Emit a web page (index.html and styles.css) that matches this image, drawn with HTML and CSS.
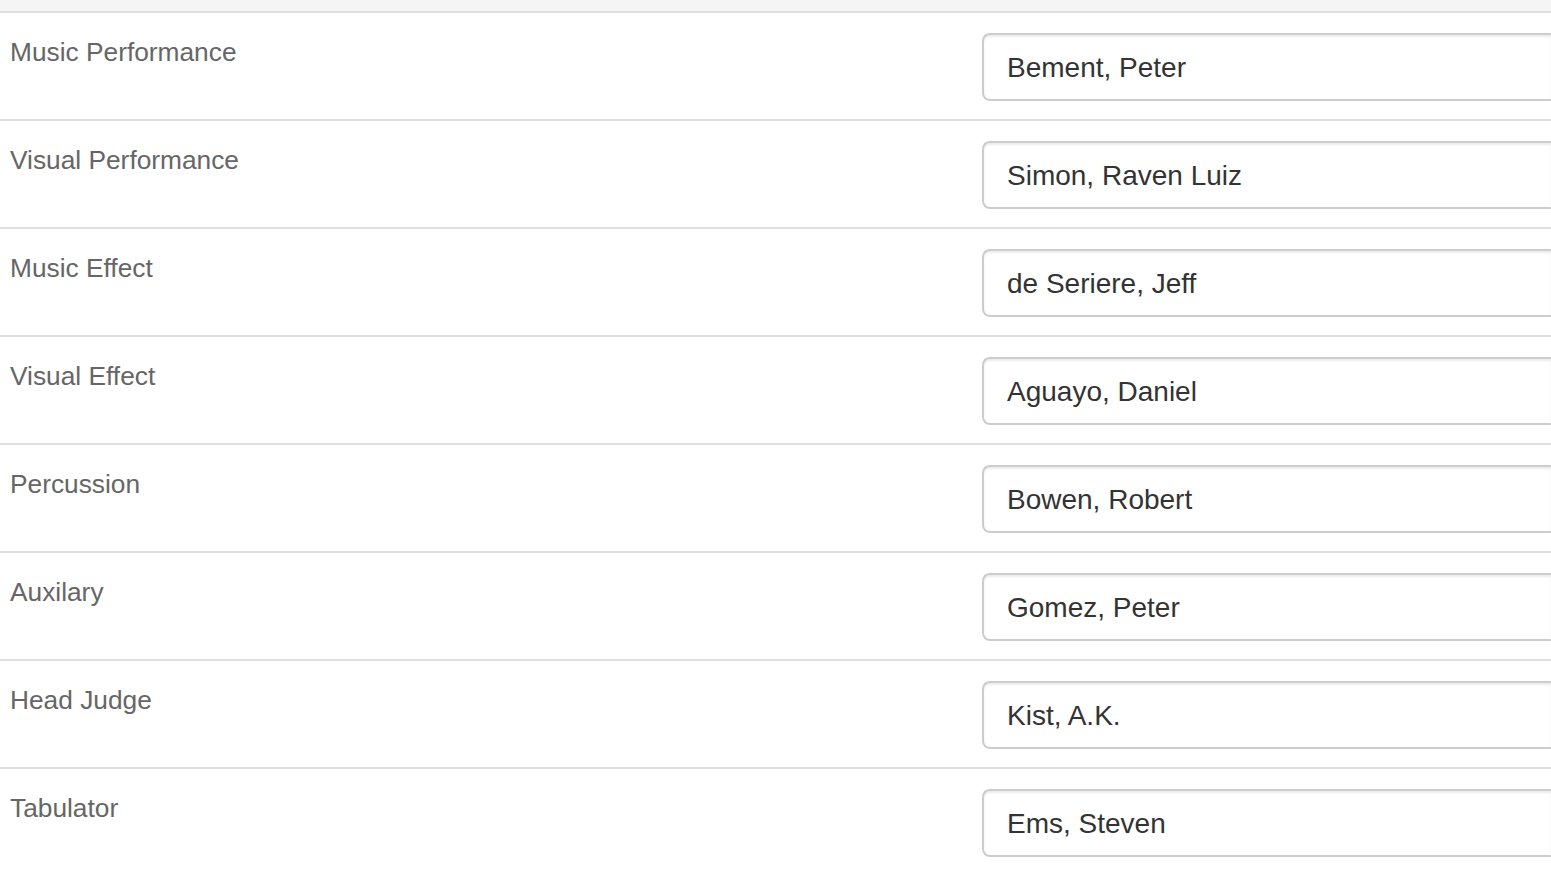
FILE: index.html
```html
<!DOCTYPE html>
<html>
<head>
<meta charset="utf-8">
<link rel="stylesheet" href="styles.css">
</head>
<body>
<div class="topbar"></div>
<div class="judges">
  <div class="row"><div class="label">Music Performance</div><div class="field"><input class="control" type="text" value="Bement, Peter"></div></div>
  <div class="row"><div class="label">Visual Performance</div><div class="field"><input class="control" type="text" value="Simon, Raven Luiz"></div></div>
  <div class="row"><div class="label">Music Effect</div><div class="field"><input class="control" type="text" value="de Seriere, Jeff"></div></div>
  <div class="row"><div class="label">Visual Effect</div><div class="field"><input class="control" type="text" value="Aguayo, Daniel"></div></div>
  <div class="row"><div class="label">Percussion</div><div class="field"><input class="control" type="text" value="Bowen, Robert"></div></div>
  <div class="row"><div class="label">Auxilary</div><div class="field"><input class="control" type="text" value="Gomez, Peter"></div></div>
  <div class="row"><div class="label">Head Judge</div><div class="field"><input class="control" type="text" value="Kist, A.K."></div></div>
  <div class="row"><div class="label">Tabulator</div><div class="field"><input class="control" type="text" value="Ems, Steven"></div></div>
</div>
</body>
</html>
```
FILE: styles.css
```css
html, body {
  margin: 0;
  padding: 0;
  background: #fff;
  overflow: hidden;
}
body {
  font-family: "Liberation Sans", Arial, Helvetica, sans-serif;
}
.topbar {
  height: 11px;
  background: #f5f5f5;
  border-bottom: 2px solid #dedede;
}
.judges {
  display: flex;
  flex-direction: column;
}
.row {
  display: grid;
  grid-template-columns: 982px 1fr;
  padding: 20px 0 18px;
  border-bottom: 2px solid #dedede;
}
.label {
  padding: 1px 0 0 10px;
  font-size: 26.3px;
  line-height: 37px;
  color: #666;
}
.field {
  display: flex;
  min-width: 0;
}
.control {
  box-sizing: border-box;
  flex: 1;
  min-width: 0;
  height: 68px;
  margin: 0;
  padding: 2px 0 0 23px;
  border: 2px solid #cccccc;
  border-right: none;
  border-radius: 8px 0 0 8px;
  box-shadow: inset 0 2px 2px rgba(0, 0, 0, 0.075);
  font-family: "Liberation Sans", Arial, Helvetica, sans-serif;
  font-size: 28px;
  color: #333;
  background: #fff;
  outline: none;
}
```
